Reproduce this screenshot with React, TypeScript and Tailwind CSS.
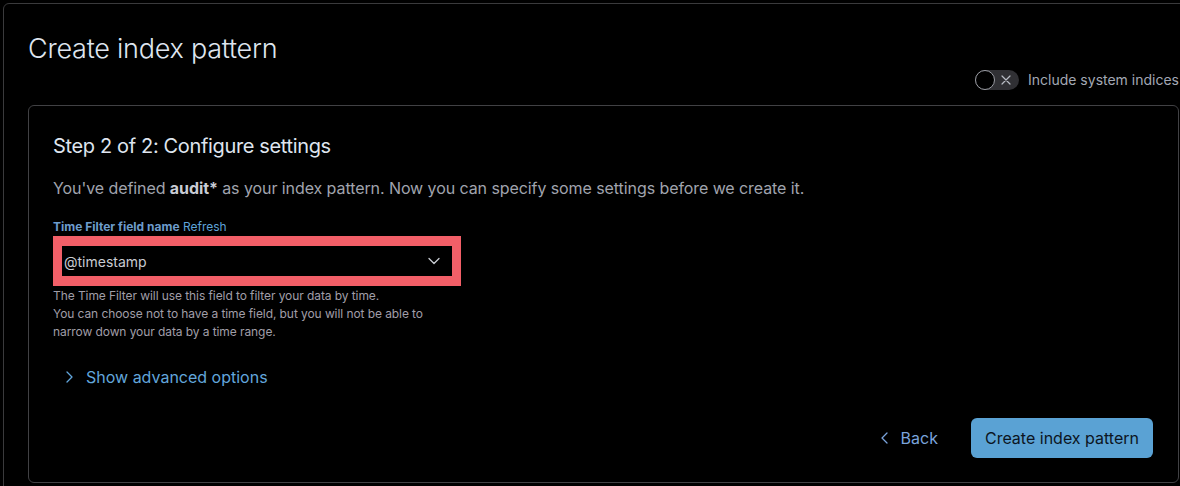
import React from "react";

export default function App() {
  return (
    <div className="w-[1180px] h-[486px] overflow-hidden bg-black font-['Inter','Noto_Sans',sans-serif]">
      <div className="ml-[3px] mt-[3px] w-[1201px] h-[600px] rounded-[6px] border border-[#3a3a3c] px-6 pt-[27px]">
        <h1 className="text-[27px] leading-[36px] font-light text-[#dfe5ef] tracking-[-0.25px]">
          Create index pattern
        </h1>
        <div className="mt-[3px] flex h-5 items-center justify-end gap-[9px]">
          <div className="relative h-5 w-11 rounded-full bg-[#303034]">
            <div className="absolute left-0 top-0 h-5 w-5 rounded-full border border-[#9a9ca3] bg-black" />
            <svg
              className="absolute left-[26px] top-[5px]"
              width="10"
              height="10"
              viewBox="0 0 10 10"
              fill="none"
              stroke="#b8bcc4"
              strokeWidth="1.2"
              strokeLinecap="round"
            >
              <path d="M1 1 L9 9 M9 1 L1 9" />
            </svg>
          </div>
          <span className="text-[14px] leading-5 text-[#a3a8b4]">Include system indices</span>
        </div>

        <div className="mt-[15px] rounded-[6px] border border-[#414144] p-6">
          <h2 className="text-[20px] leading-8 font-normal text-[#dfe5ef] tracking-[-0.35px]">
            Step 2 of 2: Configure settings
          </h2>
          <p className="mt-[14px] text-[16px] leading-6 text-[#a0a4ae] tracking-[-0.08px]">
            You've defined <b className="font-bold text-[#c8ccd4]">audit*</b> as your index pattern. Now you can specify some
            settings before we create it.
          </p>
          <div className="mt-[19px] text-[12px] leading-4">
            <span className="font-bold text-[#6d9ccc]">Time Filter field name</span>{" "}
            <span className="text-[#5ea3da]">Refresh</span>
          </div>
          <div className="mt-[1px] h-[50px] w-[408px] border-[10px] border-x-[9.5px] border-[#f25f68] bg-black">
            <div className="flex h-full items-center justify-between pl-[2px] pr-[12px]">
              <span className="text-[14px] text-[#c9ccd3]">@timestamp</span>
              <svg width="12" height="8" viewBox="0 0 12 8" fill="none" stroke="#c9ccd3" strokeWidth="1.3" strokeLinecap="round" strokeLinejoin="round">
                <path d="M1 1.5 L6 6.5 L11 1.5" />
              </svg>
            </div>
          </div>
          <div className="mt-[1px] text-[12px] leading-[18px] text-[#a09ea8] tracking-[-0.08px]">
            <div>The Time Filter will use this field to filter your data by time.</div>
            <div>You can choose not to have a time field, but you will not be able to</div>
            <div>narrow down your data by a time range.</div>
          </div>
          <div className="mt-6 flex items-center gap-[13px] pl-[13px] text-[16px] leading-6 text-[#62a6dc]">
            <svg width="7" height="12" viewBox="0 0 7 12" fill="none" stroke="#62a6dc" strokeWidth="1.3" strokeLinecap="round" strokeLinejoin="round">
              <path d="M1 1 L6 6 L1 11" />
            </svg>
            <span>Show advanced options</span>
          </div>
          <div className="mt-[29px] flex items-center justify-end gap-[33px] pr-[1px]">
            <div className="flex items-center gap-[13px] text-[16px] text-[#7aa3dc]">
              <svg width="7" height="12" viewBox="0 0 7 12" fill="none" stroke="#7aa3dc" strokeWidth="1.3" strokeLinecap="round" strokeLinejoin="round">
                <path d="M6 1 L1 6 L6 11" />
              </svg>
              <span>Back</span>
            </div>
            <button className="h-10 rounded-[6px] bg-[#5aa2d4] px-[14px] text-[16px] text-[#0c1522]">
              Create index pattern
            </button>
          </div>
        </div>
      </div>
    </div>
  );
}
